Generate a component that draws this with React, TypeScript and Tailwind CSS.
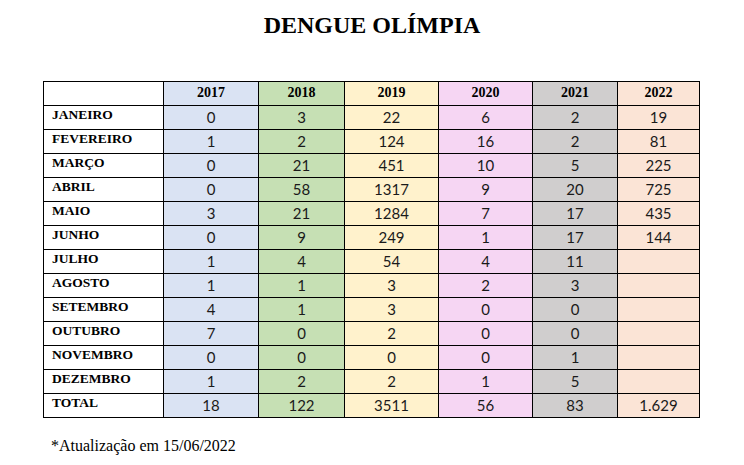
const years = ["2017", "2018", "2019", "2020", "2021", "2022"];

const colBg = [
    "bg-[#dae3f3]",
    "bg-[#c6e0b4]",
    "bg-[#fff2cc]",
    "bg-[#f6d6f3]",
    "bg-[#d0cece]",
    "bg-[#fbe4d6]",
];

const colW = ["w-[95px]", "w-[86px]", "w-[94px]", "w-[94px]", "w-[85px]", "w-[82px]"];

const rows: [string, string[]][] = [
    ["JANEIRO", ["0", "3", "22", "6", "2", "19"]],
    ["FEVEREIRO", ["1", "2", "124", "16", "2", "81"]],
    ["MARÇO", ["0", "21", "451", "10", "5", "225"]],
    ["ABRIL", ["0", "58", "1317", "9", "20", "725"]],
    ["MAIO", ["3", "21", "1284", "7", "17", "435"]],
    ["JUNHO", ["0", "9", "249", "1", "17", "144"]],
    ["JULHO", ["1", "4", "54", "4", "11", ""]],
    ["AGOSTO", ["1", "1", "3", "2", "3", ""]],
    ["SETEMBRO", ["4", "1", "3", "0", "0", ""]],
    ["OUTUBRO", ["7", "0", "2", "0", "0", ""]],
    ["NOVEMBRO", ["0", "0", "0", "0", "1", ""]],
    ["DEZEMBRO", ["1", "2", "2", "1", "5", ""]],
    ["TOTAL", ["18", "122", "3511", "56", "83", "1.629"]],
];

export default function App() {
    return (
        <div className="h-[465px] w-[744px] bg-white font-['Liberation_Serif',serif] text-black">
            <h1 className="pt-[10px] text-center text-[24px] font-bold leading-[30px]">
                DENGUE OLÍMPIA
            </h1>

            <table className="ml-[43px] mt-[41px] w-[657px] table-fixed border-collapse">
                <thead>
                    <tr className="h-[24px]">
                        <th className="w-[120px] border border-black p-0" />
                        {years.map((y, i) => (
                            <th
                                key={y}
                                className={`${colW[i]} ${colBg[i]} border border-black p-0 pb-[2px] text-center align-middle text-[14px] font-bold leading-[20px]`}
                            >
                                {y}
                            </th>
                        ))}
                    </tr>
                </thead>
                <tbody>
                    {rows.map(([label, values]) => (
                        <tr key={label} className="h-[24px]">
                            <td className="border border-black p-0 pb-[5px] pl-[8px] text-left text-[13.5px] font-bold leading-[18px]">
                                {label}
                            </td>
                            {values.map((v, i) => (
                                <td
                                    key={i}
                                    className={`${colBg[i]} border border-black p-0 pb-[1px] text-center font-['Lato',sans-serif] text-[15px] leading-[21px] text-[#1a1a1a]`}
                                >
                                    {v}
                                </td>
                            ))}
                        </tr>
                    ))}
                </tbody>
            </table>

            <p className="ml-[51px] mt-[18px] text-[16px] leading-[20px]">
                *Atualização em 15/06/2022
            </p>
        </div>
    );
}
